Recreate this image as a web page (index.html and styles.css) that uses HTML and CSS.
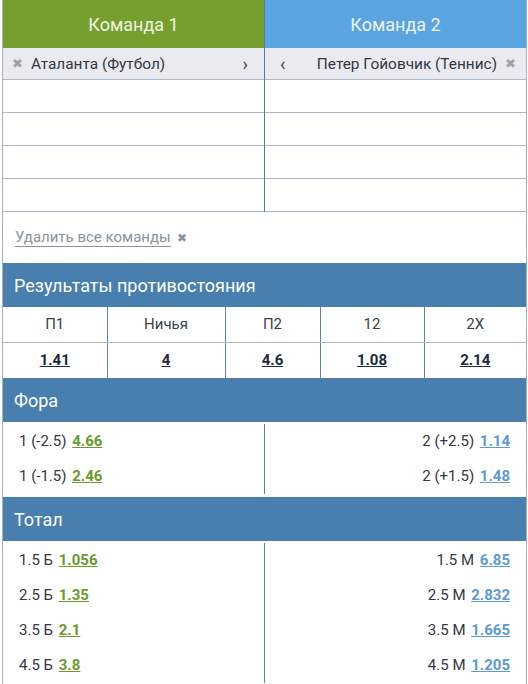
FILE: index.html
```html
<!DOCTYPE html>
<html lang="ru">
<head>
<meta charset="utf-8">
<link rel="stylesheet" href="styles.css">
</head>
<body>
<div class="wrap">
  <div class="teams">
    <div class="col">
      <div class="head green">Команда 1</div>
      <div class="team left"><span class="x">✖</span><span class="name">Аталанта (Футбол)</span><span class="arr">›</span></div>
      <div class="empty"></div><div class="empty"></div><div class="empty"></div><div class="empty"></div>
    </div>
    <div class="col col2">
      <div class="head blue">Команда 2</div>
      <div class="team right"><span class="arr">‹</span><span class="name">Петер Гойовчик (Теннис)</span><span class="x">✖</span></div>
      <div class="empty"></div><div class="empty"></div><div class="empty"></div><div class="empty"></div>
    </div>
  </div>
  <div class="remove"><a class="rm">Удалить все команды</a><span class="x">✖</span></div>

  <div class="sec">Результаты противостояния</div>
  <table class="res">
    <tr><td class="c1">П1</td><td class="c2">Ничья</td><td class="c3">П2</td><td class="c4">12</td><td class="c5">2X</td></tr>
    <tr class="odds"><td><a>1.41</a></td><td><a>4</a></td><td><a>4.6</a></td><td><a>1.08</a></td><td><a>2.14</a></td></tr>
  </table>

  <div class="sec">Фора</div>
  <div class="pair">
    <div class="side l">
      <div class="ln">1 (-2.5) <a class="g">4.66</a></div>
      <div class="ln">1 (-1.5) <a class="g">2.46</a></div>
    </div>
    <div class="side r">
      <div class="ln">2 (+2.5) <a class="b">1.14</a></div>
      <div class="ln">2 (+1.5) <a class="b">1.48</a></div>
    </div>
  </div>

  <div class="sec">Тотал</div>
  <div class="pair">
    <div class="side l">
      <div class="ln">1.5 Б <a class="g">1.056</a></div>
      <div class="ln">2.5 Б <a class="g">1.35</a></div>
      <div class="ln">3.5 Б <a class="g">2.1</a></div>
      <div class="ln">4.5 Б <a class="g">3.8</a></div>
    </div>
    <div class="side r">
      <div class="ln">1.5 М <a class="b">6.85</a></div>
      <div class="ln">2.5 М <a class="b">2.832</a></div>
      <div class="ln">3.5 М <a class="b">1.665</a></div>
      <div class="ln">4.5 М <a class="b">1.205</a></div>
    </div>
  </div>
</div>
</body>
</html>
```
FILE: styles.css
```css
* { box-sizing: border-box; }
body {
  margin: 0;
  font-family: Roboto, "Noto Sans", Arial, sans-serif;
  font-size: 15px;
  color: #323844;
  background: #fff;
}
.wrap {
  margin-left: 2px;
  width: 525px;
  border-left: 1px solid #a3b3c4;
  border-right: 1px solid #a3b3c4;
}
.teams { display: flex; }
.col { flex: 1; }
.col2 { border-left: 1px solid #4f7ea9; }
.head {
  height: 48px;
  display: flex;
  align-items: center;
  justify-content: center;
  font-size: 18px;
  color: #eef3e4;
}
.green { background: #779f2e; }
.blue { background: #5aa4df; color: #eef4fb; }
.team {
  height: 32px;
  background: #e9ebf0;
  border-bottom: 1px solid #a9b9c9;
  display: flex;
  align-items: center;
  padding: 0 10px 0 9px;
  font-size: 15.4px;
}
.team .x { color: #9aa1a9; font-size: 13px; }
.team.left .name { margin-left: 8px; flex: 1; }
.team.left .arr { margin-right: 6px; font-size: 18px; color: #444; }
.team.right .arr { margin-left: 6px; font-size: 18px; color: #444; flex: 1; }
.team.right .name { margin-right: 8px; }
.empty { height: 33px; border-bottom: 1px solid #a9b9c9; }
.remove {
  height: 51px;
  display: flex;
  align-items: center;
  padding: 0 0 0 12px;
  color: #8a939d;
}
.rm {
  border-bottom: 1px solid #8a939d;
  line-height: 17px;
  padding-top: 1px;
}
.remove .x { font-size: 12px; margin-left: 6px; color: #8a939d; }
.sec {
  height: 44px;
  background: #497faf;
  color: #fff;
  font-size: 18px;
  display: flex;
  align-items: center;
  padding-left: 11px;
}
.res {
  width: 100%;
  border-collapse: collapse;
  table-layout: fixed;
}
.res .c1 { width: 104px; }
.res .c2 { width: 118px; }
.res .c3 { width: 95px; }
.res .c4 { width: 104px; }
.res td {
  border-left: 1px solid #5d84aa;
  border-bottom: 1px solid #a9b9c9;
  text-align: center;
  height: 35px;
  padding: 0;
  color: #3a3f48;
}
.res td:first-child { border-left: none; }
.res tr.odds td { height: 36px; border-bottom: none; }
.res tr.odds a {
  color: #1c2b40;
  font-weight: bold;
  text-decoration: underline;
}
.pair { display: flex; padding: 2px 0 3px; }
.side { flex: 1; }
.side.r { border-left: 1px solid #5d84aa; text-align: right; padding-right: 16px; }
.side.l { padding-left: 16px; }
.ln { height: 35px; line-height: 35px; }
a.g { color: #6a9a2c; font-weight: bold; text-decoration: underline; margin-left: 2px; }
a.b { color: #5b9ad6; font-weight: bold; text-decoration: underline; margin-left: 2px; }
```
